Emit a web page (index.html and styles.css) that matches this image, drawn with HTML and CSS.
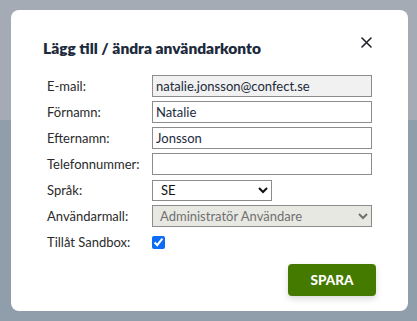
FILE: index.html
```html
<!DOCTYPE html>
<html lang="sv">
<head>
    <meta charset="UTF-8">
    <meta name="viewport" content="width=device-width, initial-scale=1.0">
    <title>Lägg till / ändra användarkonto</title>
    <link rel="stylesheet" href="styles.css">
</head>
<body>
    <div class="modal">
        <div class="modal-header">
            <h2 class="modal-title">Lägg till / ändra användarkonto</h2>
            <button class="close-btn" aria-label="Stäng">
                <svg width="11" height="11" viewBox="0 0 11 11">
                    <path d="M1 1L10 10M10 1L1 10" stroke="#1f2329" stroke-width="1.6" stroke-linecap="round"/>
                </svg>
            </button>
        </div>

        <form class="user-form">
            <label for="email">E-mail:</label>
            <input type="text" id="email" class="readonly" value="natalie.jonsson@confect.se" readonly>

            <label for="firstName">Förnamn:</label>
            <input type="text" id="firstName" value="Natalie">

            <label for="lastName">Efternamn:</label>
            <input type="text" id="lastName" value="Jonsson">

            <label for="phone">Telefonnummer:</label>
            <input type="text" id="phone" value="">

            <label for="language">Språk:</label>
            <select id="language" class="short">
                <option>SE</option>
                <option>EN</option>
            </select>

            <label for="template">Användarmall:</label>
            <select id="template" disabled>
                <option>Administratör Användare</option>
            </select>

            <label for="sandbox">Tillåt Sandbox:</label>
            <div class="check-cell">
                <input type="checkbox" id="sandbox" checked>
            </div>
        </form>

        <div class="modal-footer">
            <button class="btn-save">SPARA</button>
        </div>
    </div>
</body>
</html>
```

FILE: styles.css
```css
* {
    margin: 0;
    padding: 0;
    box-sizing: border-box;
}

body {
    font-family: Lato, 'Open Sans', sans-serif;
    background: linear-gradient(#a4abb4 0, #a4abb4 120px, #909dab 120px);
    min-height: 100vh;
    padding: 10px 9px 10px 11px;
}

.modal {
    background: white;
    width: 397px;
    height: 301px;
    border-radius: 8px;
    padding: 26px 32px 0 32px;
}

.modal-header {
    display: flex;
    justify-content: space-between;
    align-items: flex-start;
    height: 39px;
}

.modal-title {
    font-size: 15.5px;
    font-weight: 800;
    color: #1c2a3c;
    line-height: 20px;
    padding-top: 2px;
}

.close-btn {
    background: none;
    border: none;
    cursor: pointer;
    width: 11px;
    height: 11px;
    margin-top: 1px;
    margin-right: 4px;
    display: flex;
}

.user-form {
    display: grid;
    grid-template-columns: 105px 220px;
    row-gap: 4px;
    align-items: center;
    margin-left: 4px;
}

.user-form label {
    font-size: 13px;
    color: #2a2a2a;
    line-height: 22px;
}

.user-form input[type="text"],
.user-form select {
    height: 22px;
    width: 100%;
    border: 1px solid #8c8c8c;
    border-radius: 0;
    padding: 0 3px;
    font-family: inherit;
    font-size: 13px;
    color: #1c2a3c;
    background: white;
}

.user-form input.readonly {
    background: #f1f1f1;
}

.user-form select.short {
    width: 120px;
    height: 21px;
    padding-left: 4px;
    color: #111;
}

.user-form select:disabled {
    background: #e8e8e3;
    color: #707070;
    opacity: 1;
}

.check-cell {
    display: flex;
    align-items: center;
    height: 22px;
}

.check-cell input {
    width: 13px;
    height: 13px;
    accent-color: #0b6cf5;
}

.modal-footer {
    display: flex;
    justify-content: flex-end;
    margin-top: 11px;
}

.btn-save {
    width: 88px;
    height: 32px;
    background: #457a00;
    color: white;
    border: none;
    border-radius: 4px;
    font-family: inherit;
    font-size: 13.5px;
    font-weight: 900;
    box-shadow: 0 3px 6px rgba(0, 0, 0, 0.15);
    cursor: pointer;
}
```
